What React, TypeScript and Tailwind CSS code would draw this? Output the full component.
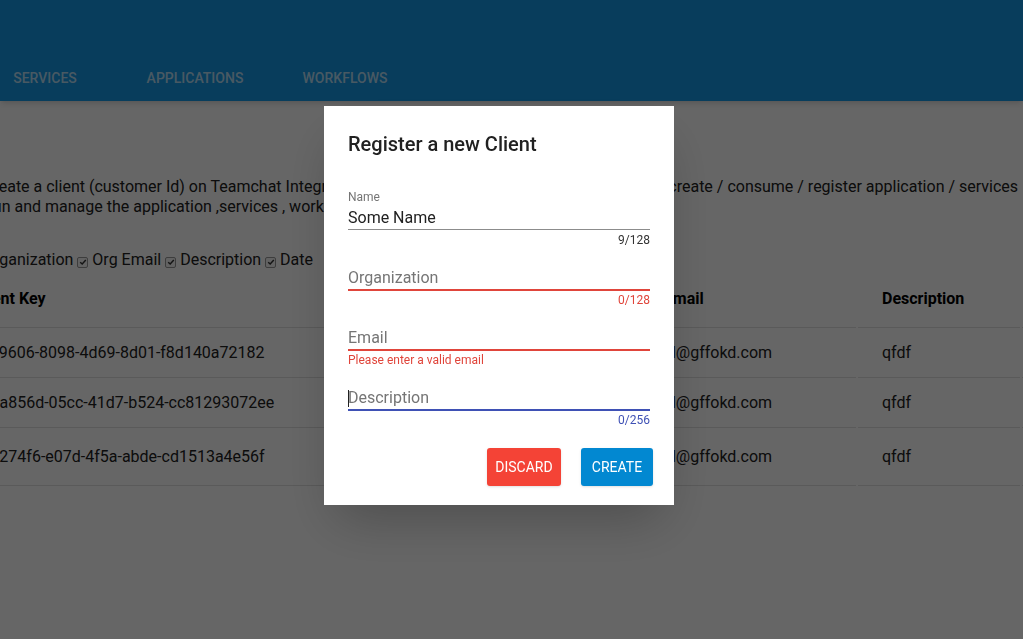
import { FC } from 'react';

type FieldProps = {
  label?: string;
  value?: string;
  placeholder?: string;
  state: 'idle' | 'error' | 'focus';
  helper?: string;
  counter?: string;
  caret?: boolean;
};

const Field: FC<FieldProps> = ({ label, value, placeholder, state, helper, counter, caret }) => {
  const line =
    state === 'error'
      ? 'h-[26px] border-b-2 border-[#e0453b]'
      : state === 'focus'
        ? 'h-[26px] border-b-2 border-[#3f51b5]'
        : 'h-[25px] border-b border-[#8c8c8c]';
  const tone = state === 'error' ? 'text-[#e0453b]' : state === 'focus' ? 'text-[#3f51b5]' : 'text-[#333333]';

  return (
    <div className="flex flex-col h-[60px]">
      <div className="h-4 text-xs leading-4 text-[#757575]">{label}</div>
      <div className={`relative ${line}`}>
        <input
          readOnly
          value={value ?? ''}
          placeholder={placeholder}
          className="w-full h-6 mt-px outline-none text-base leading-6 text-[#212121] placeholder:text-[#757575]"
        />
        {caret && <span className="absolute left-0 top-[5px] w-px h-[17px] bg-[#212121]" />}
      </div>
      <div className={`flex justify-between text-xs leading-4 ${tone} ${state === 'idle' ? 'pt-0.5' : 'pt-px'}`}>
        <span>{helper}</span>
        <span>{counter}</span>
      </div>
    </div>
  );
};

const rows = [
  { key: 'ff1f9606-8098-4d69-8d01-f8d140a72182', org: 'gffokd', email: 'qfdfdl@gffokd.com', desc: 'qfdf', date: '2019-04-02', h: 'h-[50px]' },
  { key: '3e1a856d-05cc-41d7-b524-cc81293072ee', org: 'gffokd', email: 'qfdfdl@gffokd.com', desc: 'qfdf', date: '2019-04-02', h: 'h-[50px]' },
  { key: '0c8274f6-e07d-4f5a-abde-cd1513a4e56f', org: 'gffokd', email: 'qfdfdl@gffokd.com', desc: 'qfdf', date: '2019-04-02', h: 'h-[58px]' },
];

const Check: FC = () => (
  <span className="inline-flex items-center justify-center w-[11px] h-[11px] align-[-1px] rounded-[2px] border border-[#9a9a9a] bg-[#f4f4f4]">
    <svg viewBox="0 0 10 10" className="w-[8px] h-[8px]">
      <path d="M1.5 5.2 4 7.5 8.5 2.5" fill="none" stroke="#333" strokeWidth="1.8" />
    </svg>
  </span>
);

const App: FC = () => {
  const cell = 'flex items-center pl-6 border-b border-[#e0e0e0] whitespace-nowrap';

  return (
    <div className="relative w-full min-h-screen overflow-hidden bg-white font-['Roboto',sans-serif] text-[#212121]">
      {/* top bar */}
      <header className="bg-[#1498e6] shadow-md">
        <div className="h-[54px]" />
        <nav className="flex h-[47px] ml-[-30px]">
          {['SERVICES', 'APPLICATIONS', 'WORKFLOWS'].map(t => (
            <div key={t} className="w-[150px] flex items-center justify-center text-sm font-medium text-white/70">
              {t}
            </div>
          ))}
        </nav>
      </header>

      <div className="mt-[76px] ml-[-17px] text-base leading-5 whitespace-nowrap">
        <p>Create a client (customer Id) on Teamchat Integration Platform. A client id is required, in order to create / consume / register application / services</p>
        <p>Run and manage the application ,services , workflows and all other resources of your organization</p>
      </div>

      <div className="mt-[33px] ml-[-17px] text-base leading-5 whitespace-nowrap">
        Organization <Check /> Org Email <Check /> Description <Check /> Date
      </div>

      <div className="grid grid-cols-[400px_257px_246px_162px_200px] gap-x-[2px] ml-[-51px] text-base">
        {['Client Key', 'Organization', 'Org Email', 'Description', 'Date'].map(h => (
          <div key={h} className={`${cell} h-[58px] pt-px font-bold text-black`}>{h}</div>
        ))}
        {rows.map(r => (
          [r.key, r.org, r.email, r.desc, r.date].map((v, i) => (
            <div key={r.key + i} className={`${cell} ${r.h}`}>{v}</div>
          ))
        ))}
      </div>

      {/* dialog */}
      <div className="fixed inset-0 bg-black/60">
        <div className="ml-[324px] mt-[106px] w-[350px] h-[399px] bg-white shadow-2xl px-6 pt-6 flex flex-col">
          <h2 className="text-xl leading-7 font-medium text-[#212121]">Register a new Client</h2>
          <div className="mt-[31px] flex flex-col">
            <Field label="Name" value="Some Name" state="idle" counter="9/128" />
            <Field placeholder="Organization" state="error" counter="0/128" />
            <Field placeholder="Email" state="error" helper="Please enter a valid email" />
            <Field placeholder="Description" state="focus" counter="0/256" caret />
          </div>
          <div className="mt-[19px] -mr-[3px] flex justify-end gap-5">
            <button className="w-[74px] h-[38px] rounded-[3px] bg-[#f44336] text-white text-sm shadow">DISCARD</button>
            <button className="w-[72px] h-[38px] rounded-[3px] bg-[#0288d1] text-white text-sm shadow">CREATE</button>
          </div>
        </div>
      </div>
    </div>
  );
};

export default App;
